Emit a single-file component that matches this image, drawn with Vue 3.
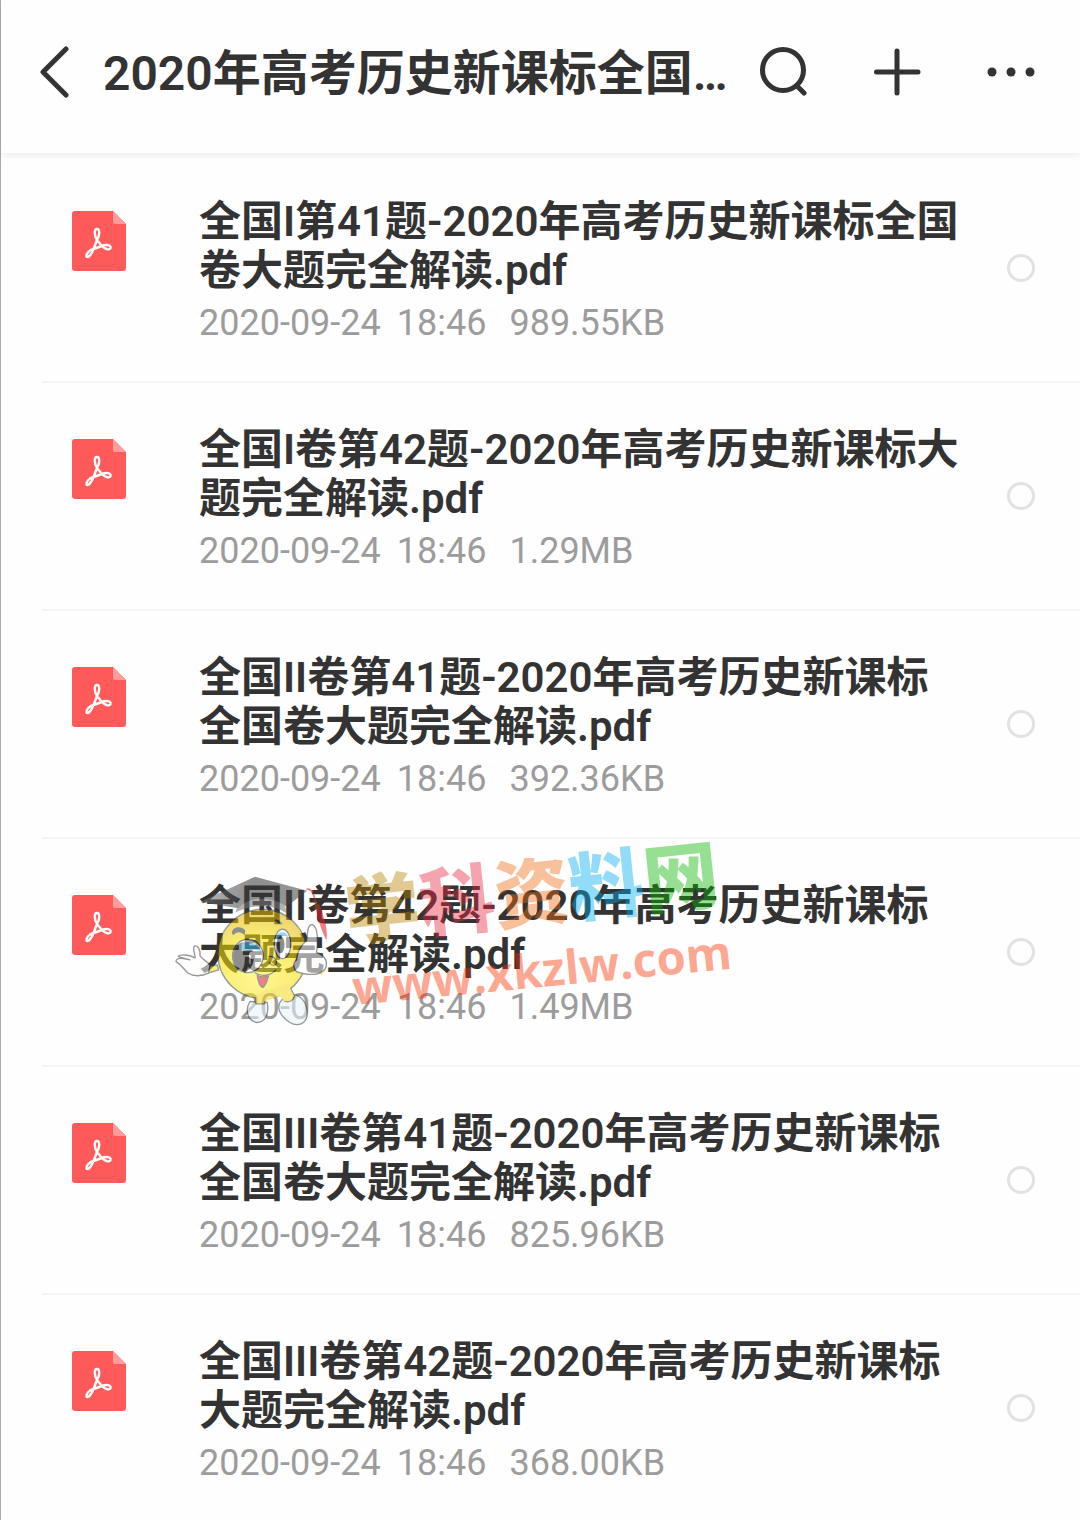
<script setup>
import { ref } from 'vue'

const title = '2020年高考历史新课标全国卷大题完全解读'

const files = ref([
    { id: 1, name: '全国I第41题-2020年高考历史新课标全国卷大题完全解读.pdf', date: '2020-09-24', time: '18:46', size: '989.55KB', checked: false },
    { id: 2, name: '全国I卷第42题-2020年高考历史新课标大题完全解读.pdf', date: '2020-09-24', time: '18:46', size: '1.29MB', checked: false },
    { id: 3, name: '全国II卷第41题-2020年高考历史新课标全国卷大题完全解读.pdf', date: '2020-09-24', time: '18:46', size: '392.36KB', checked: false },
    { id: 4, name: '全国II卷第42题-2020年高考历史新课标大题完全解读.pdf', date: '2020-09-24', time: '18:46', size: '1.49MB', checked: false, stamped: true },
    { id: 5, name: '全国III卷第41题-2020年高考历史新课标全国卷大题完全解读.pdf', date: '2020-09-24', time: '18:46', size: '825.96KB', checked: false },
    { id: 6, name: '全国III卷第42题-2020年高考历史新课标大题完全解读.pdf', date: '2020-09-24', time: '18:46', size: '368.00KB', checked: false }
])
</script>

<template>
    <div class="page">
        <header class="header">
            <button class="icon-btn" aria-label="返回">
                <svg width="30" height="54" viewBox="0 0 30 54">
                    <path d="M27 4 L4 27 L27 50" />
                </svg>
            </button>
            <h1 class="header-title">{{ title }}</h1>
            <div class="actions">
                <button class="icon-btn" aria-label="搜索">
                    <svg width="48" height="54" viewBox="0 0 48 54">
                        <circle cx="24" cy="25" r="20.500" />
                        <path d="M38 41 L45 48" />
                    </svg>
                </button>
                <button class="icon-btn" aria-label="添加">
                    <svg width="48" height="54" viewBox="0 0 48 54">
                        <path d="M24 6 V48 M3.500 27 H45" />
                    </svg>
                </button>
                <button class="icon-btn dots" aria-label="更多">
                    <svg width="48" height="54" viewBox="0 0 48 54">
                        <circle cx="5" cy="27" r="4.500" />
                        <circle cx="24" cy="27" r="4.500" />
                        <circle cx="43" cy="27" r="4.500" />
                    </svg>
                </button>
            </div>
        </header>

        <ul class="file-list">
            <li v-for="file in files" :key="file.id" class="file-item">
                <svg class="file-icon" width="54" height="60" viewBox="0 0 54 60">
                    <path d="M3 0 H41 L54 13 V57 Q54 60 51 60 H3 Q0 60 0 57 V3 Q0 0 3 0 Z" fill="#ff5a5a" />
                    <path d="M41 0 L54 13 H43 Q41 13 41 11 Z" fill="#ff9c9c" />
                    <path
                        d="M25 29 C22 24 22 18 25 18 C28 18 28 24 25 29 L30 35 C34 33 39 34 38.500 37 C38 39.500 33 38.500 30 35 L21.500 38 C20 43 16 47.500 14.500 45.500 C14 43 17 39 21.500 38 Z"
                        fill="none"
                        stroke="#fff"
                        stroke-width="2.400"
                        stroke-linejoin="round"
                    />
                </svg>
                <div class="file-info">
                    <label class="file-name" :for="`file-${file.id}`">{{ file.name }}</label>
                    <div class="file-meta">
                        <span class="file-date">{{ file.date }}</span>
                        <span class="file-time">{{ file.time }}</span>
                        <span>{{ file.size }}</span>
                    </div>
                </div>
                <input :id="`file-${file.id}`" v-model="file.checked" class="file-check" type="checkbox">

                <svg v-if="file.stamped" class="watermark" width="570" height="200" viewBox="170 836 570 200">
                    <defs>
                        <radialGradient id="face" cx="0.45" cy="0.75" r="0.75">
                            <stop offset="0" stop-color="#fff23c" />
                            <stop offset="0.6" stop-color="#f6e000" />
                            <stop offset="1" stop-color="#e0b000" />
                        </radialGradient>
                        <linearGradient id="cap" x1="0" y1="0" x2="1" y2="0">
                            <stop offset="0" stop-color="#777" />
                            <stop offset="0.5" stop-color="#333" />
                            <stop offset="1" stop-color="#444" />
                        </linearGradient>
                    </defs>
                    <g class="mascot" transform="translate(160 860) scale(0.333)">
                        <!-- arms and hands -->
                        <path d="M140 320 L172 315 L176 330 L144 340 Z" fill="#f6e000" />
                        <path d="M146 340 C125 350 100 350 85 340 C72 330 62 312 48 305 C48 290 75 296 90 300 L55 290 C60 282 90 284 106 294 C104 278 96 264 104 258 C114 256 122 270 120 288 C130 300 146 308 150 316 Z" fill="#fff" />
                        <path d="M484 296 C500 310 500 326 480 342" class="cuff" />
                        <!-- feet -->
                        <path d="M270 425 C255 450 262 482 290 488 C318 488 328 460 322 428 Z" fill="#e8f4fb" />
                        <path d="M366 420 C345 440 362 470 390 488 C414 502 442 492 442 460 C442 430 425 408 404 404 Z" fill="#e8f4fb" />
                        <path d="M288 405 V432 H314 V410 M365 400 L374 424 C390 430 402 420 404 408 L392 385" fill="#f6e000" />
                        <!-- head -->
                        <circle cx="308" cy="282" r="134" fill="url(#face)" />
                        <path d="M286 405 L290 428 L316 424 L360 408 L374 424 L398 405 L385 370 Z" fill="#f6d820" stroke="none" />
                        <!-- eyes -->
                        <path d="M216 220 C216 200 244 196 256 212 L254 226 C242 214 230 214 220 226 Z" fill="#333" stroke="none" />
                        <path d="M344 180 C352 176 364 184 368 194 C358 194 350 188 344 180 Z" fill="#333" stroke="none" />
                        <ellipse cx="264" cy="288" rx="46" ry="50" fill="#fff" />
                        <ellipse cx="250" cy="292" rx="30" ry="42" fill="#333" />
                        <path d="M245 252 C265 240 292 252 306 274 C285 268 262 268 245 275 Z" fill="#3bb4e6" stroke="none" />
                        <circle cx="278" cy="286" r="11" fill="#fff" stroke="none" />
                        <ellipse cx="368" cy="252" rx="25" ry="44" fill="#fff" />
                        <path d="M350 232 C354 212 378 212 386 232 C376 226 362 226 350 240 Z" fill="#3bb4e6" stroke="none" />
                        <ellipse cx="362" cy="254" rx="12" ry="26" fill="#333" stroke="none" />
                        <!-- nose and mouth -->
                        <path d="M326 290 C340 286 354 300 348 314 C340 320 330 314 328 306" fill="#f6e000" />
                        <path d="M284 338 C304 352 332 348 348 330" fill="none" />
                        <path d="M292 346 C294 366 302 384 310 382 C318 376 322 362 326 348 C314 352 302 352 292 346 Z" fill="#e21c28" />
                        <!-- raised hand -->
                        <path d="M410 300 C395 310 402 338 420 338 C440 346 470 345 482 338 C502 330 504 308 494 294 C484 280 478 280 470 278 C476 250 474 200 458 194 C442 192 444 220 440 242 C425 255 412 275 410 300 Z" fill="#fff" />
                        <!-- cap and tassel -->
                        <path d="M232 142 C234 120 260 110 300 110 C350 108 376 116 380 160 C340 132 280 132 226 158 Z" fill="#777" stroke="none" />
                        <path d="M120 126 L285 50 L442 92 L380 140 C340 110 270 105 235 145 Z" fill="url(#cap)" stroke="none" />
                        <path d="M440 88 C456 84 464 104 468 136 L476 165" class="tassel" />
                        <path d="M466 136 L480 134 C488 165 506 200 500 242 C486 215 474 180 466 136 Z" fill="#e21c28" stroke="none" />
                        <circle cx="472" cy="140" r="8" fill="#a84a00" stroke="none" />
                    </g>
                    <text class="mark-name" transform="translate(348 940) rotate(-6)">
                        <tspan fill="#ba8500">学</tspan><tspan fill="#e92840">科</tspan><tspan fill="#f06e18">资</tspan><tspan fill="#00aef5">料</tspan><tspan fill="#0ab500">网</tspan>
                    </text>
                    <text class="mark-url" transform="translate(354 1005) rotate(-5.500)">www.xkzlw.com</text>
                </svg>
            </li>
        </ul>
    </div>
</template>

<style>
body {
    margin: 0;
    background-color: #fefefe;
}
</style>

<style scoped>
.page {
    min-height: 100vh;
    box-sizing: border-box;
    border-left: 1px solid #aaa;
    background-color: #fefefe;
    color: #333;
    font-family: Roboto, "Noto Sans CJK SC", sans-serif;
}

.header {
    display: flex;
    align-items: center;
    height: 153px;
    box-sizing: border-box;
    padding: 0 45px 9px 38px;
    box-shadow: 0 2px 8px rgba(0, 0, 0, 0.08);
}

.icon-btn {
    display: block;
    padding: 0;
    border: none;
    background: transparent;
    cursor: pointer;
}

.icon-btn svg {
    display: block;
    fill: none;
    stroke: #333;
    stroke-width: 5;
    stroke-linecap: round;
    stroke-linejoin: round;
}

.icon-btn.dots svg {
    fill: #333;
    stroke: none;
}

.header-title {
    flex: 1;
    min-width: 0;
    margin: 0 24px 0 34px;
    padding-top: 4px;
    overflow: hidden;
    font-size: 48px;
    font-weight: 600;
    line-height: 60px;
    text-overflow: ellipsis;
    white-space: nowrap;
}

.actions {
    display: flex;
    gap: 66px;
}

.file-list {
    margin: 0;
    padding: 2px 0 0 41px;
    list-style: none;
}

.file-item {
    position: relative;
    display: flex;
    align-items: center;
    padding: 42px 45px 36px 30px;
    border-bottom: 2px solid #f5f5f5;
}

.file-item:last-child {
    border-bottom: none;
}

.file-icon {
    flex-shrink: 0;
    align-self: flex-start;
    margin-top: 14px;
}

.file-info {
    flex: 1;
    min-width: 0;
    margin: 0 42px 0 73px;
}

.file-name {
    display: block;
    font-size: 42px;
    font-weight: 600;
    line-height: 49px;
    word-break: break-all;
}

.file-meta {
    display: flex;
    margin-top: 6px;
    color: #9c9c9c;
    font-size: 36px;
    line-height: 44px;
}

.file-date {
    margin-right: 16px;
}

.file-time {
    margin-right: 23px;
}

.file-check {
    flex-shrink: 0;
    width: 28px;
    height: 28px;
    margin: 0 0 6px;
    border: 3px solid #e2e2e2;
    border-radius: 50%;
    appearance: none;
    cursor: pointer;
}

.file-check:checked {
    border-color: #ff5a5a;
    background-color: #ff5a5a;
}

.watermark {
    position: absolute;
    top: -3px;
    left: 128px;
    overflow: visible;
    pointer-events: none;
}

.mascot {
    opacity: 0.55;
    stroke: #444;
    stroke-width: 4;
    stroke-linejoin: round;
}

.cuff {
    fill: none;
    stroke: #f0d800;
    stroke-width: 10;
}

.tassel {
    fill: none;
    stroke: #e21c28;
    stroke-width: 5;
}

.mark-name {
    font-family: "Noto Sans CJK SC", sans-serif;
    font-size: 75px;
    font-weight: 900;
    opacity: 0.42;
}

.mark-url {
    fill: #fa3000;
    font-family: "Open Sans", sans-serif;
    font-size: 47px;
    font-weight: 700;
    opacity: 0.42;
}
</style>
